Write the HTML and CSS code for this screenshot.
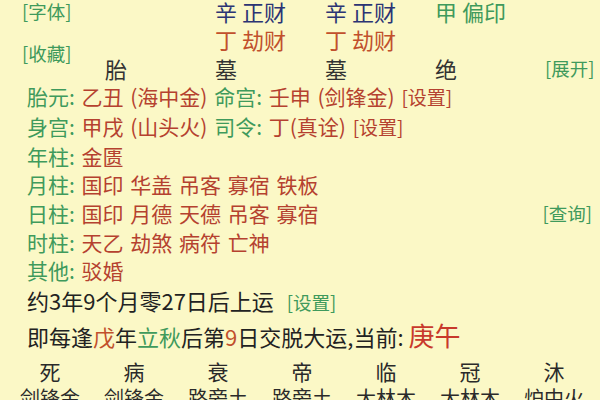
FILE: index.html
```html
<!DOCTYPE html>
<html lang="zh-CN">
<head>
  <meta charset="UTF-8">
  <meta name="viewport" content="width=device-width, initial-scale=1.0">
  <title>排盘</title>
  <link rel="stylesheet" href="styles.css">
</head>
<body>
  <div class="chart">
    <div class="pillars">
      <div class="tools">
        <a href="#" class="link">[字体]</a>
        <a href="#" class="link">[收藏]</a>
      </div>
      <div class="cell r1 c2"></div>
      <div class="cell r1 c3 navy">辛 正财</div>
      <div class="cell r1 c4 navy">辛 正财</div>
      <div class="cell r1 c5 green">甲 偏印</div>
      <div class="cell r2 c3 orange">丁 劫财</div>
      <div class="cell r2 c4 orange">丁 劫财</div>
      <div class="cell r3 c2 stage">胎</div>
      <div class="cell r3 c3 stage">墓</div>
      <div class="cell r3 c4 stage">墓</div>
      <div class="cell r3 c5 stage">绝</div>
      <div class="cell r3 c6 right"><a href="#" class="link">[展开]</a></div>
    </div>

    <div class="info">
      <div class="line">
        <span class="label">胎元:</span> <span class="value">乙丑 (海中金)</span>
        <span class="label">命宫:</span> <span class="value">壬申 (剑锋金)</span>
        <a href="#" class="set">[设置]</a>
      </div>
      <div class="line">
        <span class="label">身宫:</span> <span class="value">甲戌 (山头火)</span>
        <span class="label">司令:</span> <span class="value">丁(真诠)</span>
        <a href="#" class="set">[设置]</a>
      </div>
      <div class="line"><span class="label">年柱:</span> <span class="value">金匮</span></div>
      <div class="line"><span class="label">月柱:</span> <span class="value">国印 华盖 吊客 寡宿 铁板</span></div>
      <div class="line split">
        <span><span class="label">日柱:</span> <span class="value">国印 月德 天德 吊客 寡宿</span></span>
        <a href="#" class="link">[查询]</a>
      </div>
      <div class="line"><span class="label">时柱:</span> <span class="value">天乙 劫煞 病符 亡神</span></div>
      <div class="line"><span class="label">其他:</span> <span class="value">驳婚</span></div>
    </div>

    <div class="luck">
      <div class="luck-line first">约3年9个月零27日后上运 <a href="#" class="link luck-set">[设置]</a></div>
      <div class="luck-line second">即每逢<span class="hl-red">戊</span>年<span class="hl-green">立秋</span>后第<span class="hl-red">9</span>日交脱大运,当前: <span class="current">庚午</span></div>
    </div>

    <div class="cycle">
      <div class="stage-name">死</div><div class="stage-name">病</div><div class="stage-name">衰</div><div class="stage-name">帝</div><div class="stage-name">临</div><div class="stage-name">冠</div><div class="stage-name">沐</div>
      <div>剑锋金</div><div>剑锋金</div><div>路旁土</div><div>路旁土</div><div>大林木</div><div>大林木</div><div>炉中火</div>
    </div>
  </div>
</body>
</html>
```

FILE: styles.css
```css
:root {
  --bg: #fbf8c6;
  --green: #3f9a5c;
  --red: #b5412f;
  --orange: #c1502c;
  --navy: #2b3474;
  --dark: #2a2a2a;
}

* {
  margin: 0;
  padding: 0;
  box-sizing: border-box;
}

body {
  background: var(--bg);
  font-family: "Noto Sans CJK SC", "Noto Sans", sans-serif;
  color: var(--dark);
  overflow: hidden;
}

a {
  text-decoration: none;
}

.link {
  color: var(--green);
  font-size: 18.5px;
  white-space: nowrap;
}

.chart {
  padding: 0 8px 0 22px;
}

/* top pillars table */
.pillars {
  display: grid;
  grid-template-columns: 83px repeat(4, 110px) 1fr;
  grid-template-rows: repeat(3, 28.4px);
  margin-top: -3px;
  font-size: 22px;
  line-height: 28.4px;
}

.tools {
  grid-column: 1;
  grid-row: 1 / 4;
  display: flex;
  flex-direction: column;
  gap: 20px;
  line-height: 22px;
  padding-top: 3px;
}

.r1 { grid-row: 1; }
.r2 { grid-row: 2; }
.r3 { grid-row: 3; }
.c2 { grid-column: 2; }
.c3 { grid-column: 3; }
.c4 { grid-column: 4; }
.c5 { grid-column: 5; }
.c6 { grid-column: 6; }

.navy { color: var(--navy); }
.green { color: var(--green); }
.orange { color: var(--orange); }
.stage { color: #333; }

.right {
  display: flex;
  justify-content: flex-end;
}

/* info lines */
.info {
  padding-left: 5px;
  font-size: 21px;
  line-height: 28.7px;
  word-spacing: 2px;
}

.line.split {
  display: flex;
  justify-content: space-between;
}

.label {
  color: var(--green);
}

.value {
  color: var(--red);
}

.set {
  color: var(--red);
  font-size: 19px;
}

/* luck section */
.luck {
  padding-left: 5px;
  font-size: 22px;
  color: #222;
}

.luck-line.first {
  line-height: 31px;
}

.luck-line.second {
  line-height: 34px;
}

.luck-set {
  margin-left: 8px;
}

.hl-red {
  color: var(--orange);
}

.hl-green {
  color: var(--green);
}

.current {
  color: #c8392b;
  font-size: 26px;
}

/* twelve stages row */
.cycle {
  display: grid;
  grid-template-columns: repeat(7, 84px);
  margin-left: -14px;
  margin-top: 4px;
  text-align: center;
  font-size: 20px;
  line-height: 26px;
  color: var(--dark);
}

.stage-name {
  font-size: 21px;
  line-height: 28px;
}
```
